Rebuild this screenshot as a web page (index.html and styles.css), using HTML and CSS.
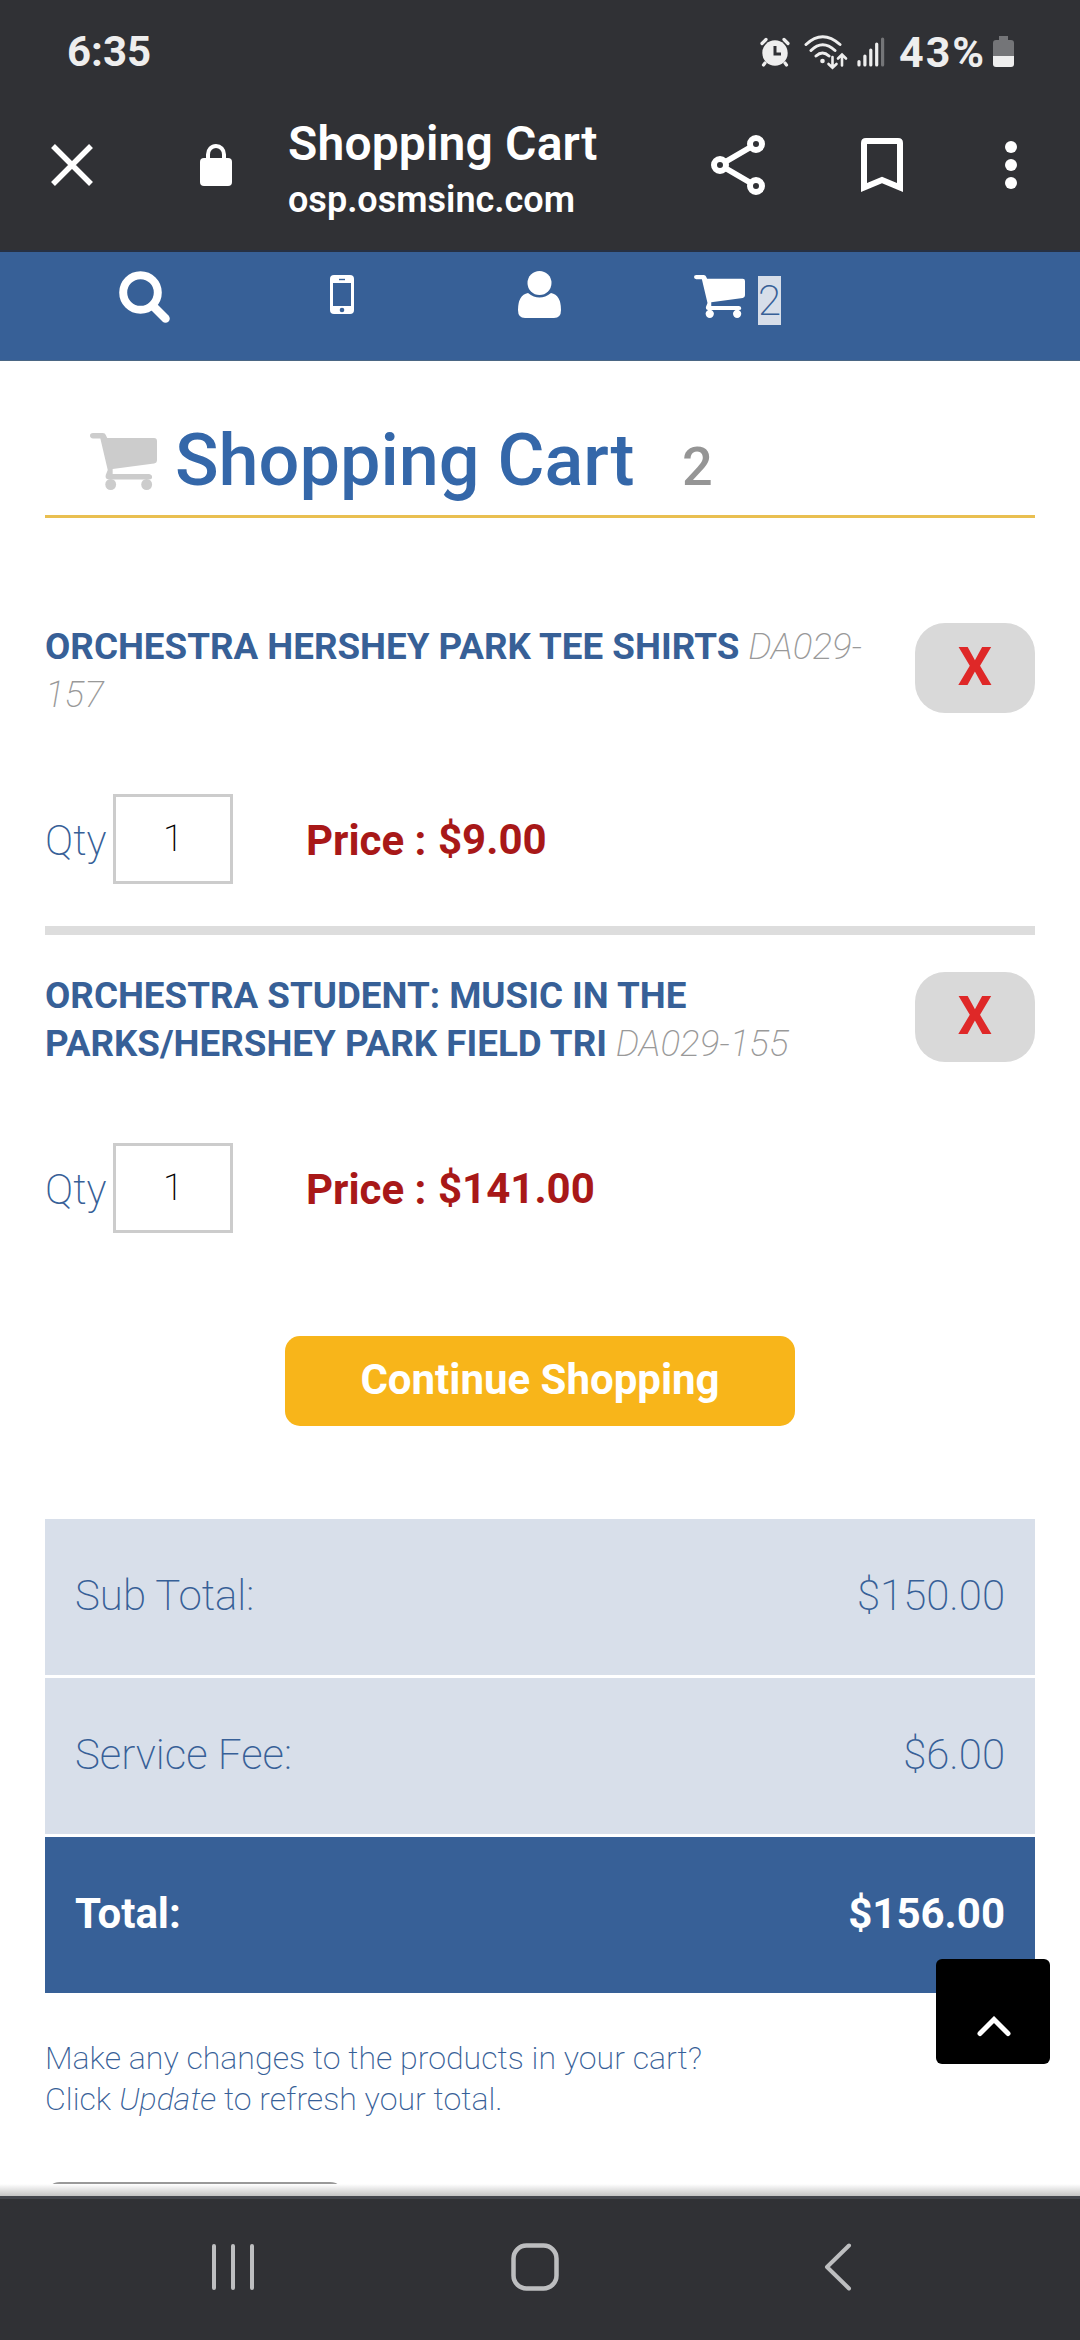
FILE: index.html
```html
<!DOCTYPE html>
<html lang="en">
<head>
<meta charset="utf-8">
<title>Shopping Cart</title>
<link rel="stylesheet" href="styles.css">
</head>
<body>
<svg class="defs" width="0" height="0" aria-hidden="true">
  <symbol id="cart" viewBox="0 0 68 57" preserveAspectRatio="none">
    <path d="M3 0H13Q15.500 0 16 2L17.500 5H65Q68 5 68 8V27Q68 30 65 30.500L23 36V41H60Q63 41.500 63 44Q63 46.500 60 46.500H19Q15 46 16 42L18 37L10.500 5.500H3Q0 5 0 2.700Q0 0 3 0Z"/>
    <ellipse cx="21" cy="51.500" rx="5.500" ry="5.500"/>
    <ellipse cx="57.500" cy="51.500" rx="5.500" ry="5.500"/>
  </symbol>
</svg>

<div class="status">
  <span class="clock">6:35</span>
  <svg class="alarm" width="30" height="30" viewBox="0 0 30 30">
    <circle cx="15" cy="16" r="12.700" fill="#eee"/>
    <path d="M2 6.500L6 2.500M28 6.500L24 2.500M5 26L3.500 28M25 26L26.500 28" stroke="#eee" stroke-width="3.200" stroke-linecap="round"/>
    <path d="M15 9V17H21" fill="none" stroke="#303135" stroke-width="3"/>
  </svg>
  <svg class="wifi" width="44" height="35" viewBox="0 0 44 35" fill="none" stroke="#eee" stroke-width="3" stroke-linecap="round">
    <path d="M2 9.500Q18.500 -6 36 9.500M7 15.500Q18.500 4 31 15.500M12 21Q18.500 15 25 21"/>
    <circle cx="18.500" cy="26" r="2.300" fill="#eee" stroke="none"/>
    <path stroke-width="2.600" d="M28.500 22V32.500M24.500 29L28.500 32.800L32.500 29M38 30.500V20M34 23.500L38 19.500L42 23.500"/>
  </svg>
  <svg class="signal" width="28" height="30" viewBox="0 0 28 30" stroke-width="3.200" stroke-linecap="round" stroke="#eee">
    <path d="M2 24.500V28M7.900 19V28M13.800 13V28M19.700 7V28"/><path d="M25.600 2V28" stroke="#747578"/>
  </svg>
  <span class="percent">43%</span>
  <svg class="battery" width="21" height="32" viewBox="0 0 21 32">
    <path d="M6 0H15V4H18Q21 4 21 7V20H0V7Q0 4 3 4H6Z" fill="#747578"/>
    <path d="M0 20H21V28Q21 31 18 31H3Q0 31 0 28Z" fill="#eee"/>
  </svg>
</div>

<header class="toolbar">
  <svg class="close" width="42" height="42" viewBox="0 0 42 42" stroke="#fff" stroke-width="5.500"><path d="M2 2L40 40M40 2L2 40"/></svg>
  <svg class="lock" width="32" height="42" viewBox="0 0 32 42"><path d="M8 16V10.500A8 8.500 0 0 1 24 10.500V16" fill="none" stroke="#fff" stroke-width="4"/><rect y="14" width="32" height="28" rx="4" fill="#fff"/></svg>
  <div class="page-id">
    <div class="page-title">Shopping Cart</div>
    <div class="page-host">osp.osmsinc.com</div>
  </div>
  <svg class="share" width="54" height="60" viewBox="0 0 54 60" fill="none" stroke="#fff" stroke-width="6">
    <path d="M9 30L45 9M9 30L45 51" stroke-width="5.500"/>
    <g fill="#303135"><circle cx="9" cy="30" r="6"/><circle cx="45" cy="9" r="6"/><circle cx="45" cy="51" r="6"/></g>
  </svg>
  <svg class="bookmark" width="42" height="54" viewBox="0 0 42 54" fill="none" stroke="#fff" stroke-width="6"><path d="M3 49.500V5Q3 3 5 3H37Q39 3 39 5V49.500L21 42Z"/></svg>
  <svg class="menu" width="12" height="48" viewBox="0 0 12 48" fill="#fff"><circle cx="6" cy="6" r="6"/><circle cx="6" cy="24" r="6"/><circle cx="6" cy="42" r="6"/></svg>
</header>

<nav class="site-nav">
  <svg class="search" width="51" height="52" viewBox="0 0 51 52" fill="none" stroke="#fff"><circle cx="21.500" cy="21.500" r="17.300" stroke-width="8"/><path d="M34 35L46.500 47.500" stroke-width="8.500" stroke-linecap="round"/></svg>
  <svg class="phone" width="24" height="39" viewBox="0 0 24 39"><rect width="24" height="39" rx="4" fill="#fff"/><rect x="3" y="8" width="18" height="23" fill="#376097"/><path d="M9 4.500H15" stroke="#376097" stroke-width="1.400"/><circle cx="12" cy="35" r="2.300" fill="#376097"/></svg>
  <svg class="user" width="43" height="47" viewBox="0 0 43 47" fill="#fff"><circle cx="21.500" cy="12" r="12"/><path d="M10 22Q21.500 31 33 22Q43 24 43 39Q43 47 36 47H7Q0 47 0 39Q0 24 10 22Z"/></svg>
  <svg class="nav-cart" width="51" height="43" fill="#fff"><use href="#cart"/></svg>
  <span class="nav-count">2</span>
</nav>

<main class="page">
  <h1 class="heading"><svg class="heading-cart" width="67" height="57" fill="#ccc"><use href="#cart"/></svg><span class="heading-text">Shopping Cart</span><span class="heading-count">2</span></h1>

  <section class="item">
    <div class="item-head">
      <p class="item-name"><b>ORCHESTRA HERSHEY PARK TEE SHIRTS</b> <i>DA029-157</i></p>
      <button class="remove">X</button>
    </div>
    <div class="item-row"><span class="qty-label">Qty</span><span class="qty">1</span><span class="price">Price :</span><span class="amount">$9.00</span></div>
  </section>

  <section class="item item-next">
    <div class="item-head">
      <p class="item-name"><b>ORCHESTRA STUDENT: MUSIC IN THE PARKS/HERSHEY PARK FIELD TRI</b> <i>DA029-155</i></p>
      <button class="remove">X</button>
    </div>
    <div class="item-row"><span class="qty-label">Qty</span><span class="qty">1</span><span class="price">Price :</span><span class="amount">$141.00</span></div>
  </section>

  <button class="continue">Continue Shopping</button>

  <div class="totals">
    <div class="total-row"><span>Sub Total:</span><span>$150.00</span></div>
    <div class="total-row"><span>Service Fee:</span><span>$6.00</span></div>
    <div class="total-row grand"><span>Total:</span><span>$156.00</span></div>
  </div>

  <p class="note">Make any changes to the products in your cart?<br>Click <i>Update</i> to refresh your total.</p>
  <div class="update"></div>
  <div class="fade"></div>
  <a class="to-top"><svg width="34" height="21" viewBox="0 0 34 21" fill="none" stroke="#fff" stroke-width="5" stroke-linecap="round"><path d="M3 17.500L17 3.500L31 17.500"/></svg></a>
</main>

<footer class="system-nav">
  <svg class="recents" width="44" height="48" viewBox="0 0 44 48" stroke="#bdbec0" stroke-width="4" stroke-linecap="round"><path d="M3 3V45M22 3V45M41 3V45"/></svg>
  <svg class="home" width="48" height="48" viewBox="0 0 48 48" fill="none" stroke="#bdbec0" stroke-width="4.500"><rect x="2.500" y="2.500" width="43" height="43" rx="13"/></svg>
  <svg class="back" width="28" height="48" viewBox="0 0 28 48" fill="none" stroke="#bdbec0" stroke-width="4" stroke-linecap="round" stroke-linejoin="round"><path d="M25 2.500L3 24L25 45.500"/></svg>
</footer>
</body>
</html>
```
FILE: styles.css
```css
* { box-sizing: border-box; }
body { margin: 0; width: 1080px; height: 2340px; overflow: hidden; background: #fff; font-family: Roboto, "Liberation Sans", sans-serif; }
p, h1 { margin: 0; }
svg { display: block; flex: none; }
button { border: 0; padding: 0; font-family: inherit; }
.defs { position: absolute; }

.status { height: 104px; background: #303135; color: #eee; display: flex; align-items: center; padding-left: 67px; font-size: 42px; font-weight: 700; line-height: 106px; }
.clock { width: 693px; }
.wifi { margin-left: 14px; }
.signal { margin-left: 9px; }
.percent { width: 93px; margin-left: 14px; font-size: 43px; letter-spacing: 2px; }
.battery { margin-left: 1px; }

.toolbar { height: 148px; background: #303135; border-bottom: 2px solid #273143; display: flex; align-items: center; padding: 0 0 24px 51px; color: #fff; }
.lock { margin-left: 107px; }
.page-id { margin-left: 56px; width: 423px; padding-top: 9px; }
.page-title { font-size: 48px; font-weight: 600; line-height: 57px; letter-spacing: 0.150px; }
.page-host { font-size: 36px; font-weight: 600; line-height: 52px; padding-top: 2px; margin-bottom: -2px; }
.bookmark { margin-left: 96px; }
.menu { margin-left: 102px; }

.site-nav { height: 109px; background: #376097; border-bottom: 1px solid #4a6684; display: flex; align-items: flex-start; padding: 19px 0 0 119px; }
.phone { margin: 4px 0 0 160px; }
.user { margin-left: 164px; }
.nav-cart { margin: 4px 0 0 133px; }
.nav-count { margin: 5px 0 0 13px; width: 23px; height: 49px; line-height: 49px; background: #d7dee9; color: #376097; font-size: 42px; font-weight: 200; text-align: center; }

.page { position: relative; height: 1835px; padding: 0 45px; overflow: hidden; }
.heading { height: 157px; border-bottom: 3px solid #e9bf50; display: flex; align-items: baseline; padding: 55px 0 0 45px; font-weight: 500; line-height: 90px; }
.heading-cart { align-self: flex-start; margin-top: 17px; }
.heading-text { margin-left: 18px; width: 507px; font-size: 72px; color: #3467a9; white-space: nowrap; }
.heading-count { font-size: 54px; color: #959595; }

.item { padding-top: 105px; height: 408px; }
.item-next { padding-top: 37px; height: 349px; border-top: 9px solid #ddd; }
.item-head { display: flex; justify-content: space-between; height: 171px; }
.item-name { width: 840px; font-size: 36.750px; line-height: 48px; font-weight: 200; }
.item-name b { color: #376097; font-weight: 700; }
.item-name i { color: #999; }
.remove { width: 120px; height: 90px; padding-bottom: 4px; border-radius: 30px; background: #d9d9d9; color: #df2828; font-size: 54px; font-weight: 700; }
.item-row { display: flex; height: 90px; line-height: 94px; font-size: 42px; }
.qty-label { width: 68px; color: #376097; font-weight: 200; }
.qty { width: 120px; border: 3px solid #ccc; font-size: 36.750px; line-height: 84px; font-weight: 200; text-align: center; color: #000; }
.price, .amount { color: #a81818; font-weight: 700; }
.price { width: 132px; margin-left: 73px; }
.amount { line-height: 92px; }

.continue { display: block; margin: 61px auto 0; width: 510px; height: 90px; padding-bottom: 4px; border-radius: 15px; background: #f8b51a; color: #fff; font-size: 42px; font-weight: 700; }
.totals { margin-top: 93px; display: grid; gap: 3px; }
.total-row { height: 156px; padding: 0 30px 4px; display: flex; justify-content: space-between; align-items: center; background: #d8dfea; color: #376097; font-size: 42px; font-weight: 200; }
.grand { background: #376097; color: #fff; font-weight: 700; }
.note { margin-top: 45px; font-size: 32.100px; line-height: 41px; font-weight: 200; color: #376097; }
.update { margin-top: 62px; width: 300px; height: 90px; border: 2px solid #999; border-radius: 15px; }

.fade { position: absolute; left: 0; right: 0; bottom: 0; height: 12px; background: linear-gradient(#fff, #c4c4c4); }
.to-top { position: absolute; left: 936px; top: 1598px; width: 114px; height: 105px; padding: 57px 0 0 41px; border-radius: 6px; background: #000; }

.system-nav { height: 144px; background: #303135; border-top: 3px solid #42454c; display: flex; padding: 44px 0 0 211px; }
.home { margin-left: 256px; }
.back { margin-left: 265px; }
```
